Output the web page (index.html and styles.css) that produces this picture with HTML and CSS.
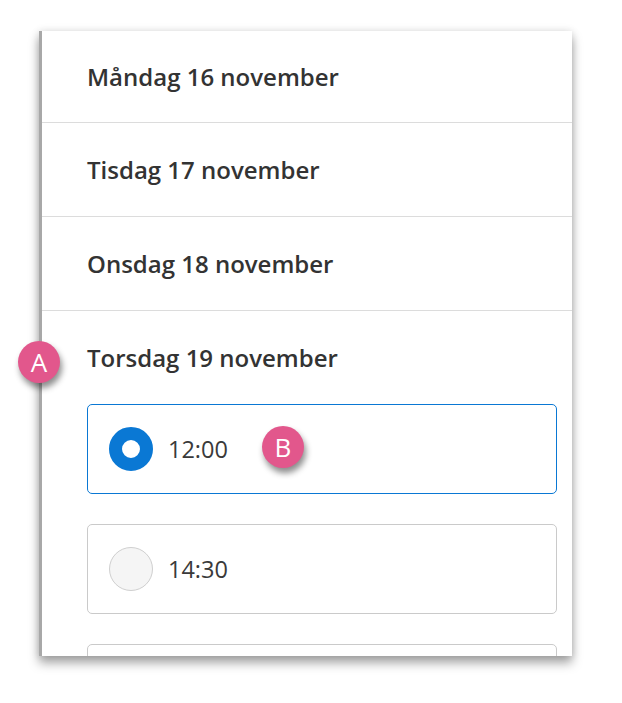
FILE: index.html
```html
<!DOCTYPE html>
<html lang="sv">
<head>
    <meta charset="UTF-8">
    <meta name="viewport" content="width=device-width, initial-scale=1.0">
    <title>Välj tid</title>
    <link rel="stylesheet" href="styles.css">
</head>
<body>
    <div class="panel">
        <div class="day">Måndag 16 november</div>
        <div class="day">Tisdag 17 november</div>
        <div class="day">Onsdag 18 november</div>
        <div class="day day-open">Torsdag 19 november</div>

        <div class="slots">
            <label class="slot selected">
                <span class="radio"></span>
                <span class="time">12:00</span>
            </label>
            <label class="slot">
                <span class="radio"></span>
                <span class="time">14:30</span>
            </label>
            <!-- next slot is only partly visible -->
            <div class="slot"></div>
        </div>
    </div>

    <div class="badge badge-a">A</div>
    <div class="badge badge-b">B</div>
</body>
</html>
```

FILE: styles.css
```css
html, body {
    height: 100%;
}

body {
    margin: 0;
    padding: 31px 0 0 39px;
    box-sizing: border-box;
    background: #fff;
    font-family: "Open Sans", Arial, sans-serif;
    color: #333;
}

.panel {
    width: 530px;
    height: 625px;
    overflow: hidden;
    background: #fff;
    border-left: 3px solid #a8a8a8;
    box-shadow: 0 7px 10px rgba(0, 0, 0, 0.35), 0 0 8px rgba(0, 0, 0, 0.12);
}

.day {
    height: 93px;
    display: flex;
    align-items: center;
    padding-left: 45px;
    font-size: 24px;
    font-weight: 600;
    border-bottom: 1px solid #dcdcdc;
}

.day:first-child {
    height: 91px;
}

.day-open {
    border-bottom: none;
}

.slots {
    padding: 0 15px 0 45px;
}

.slot {
    display: flex;
    align-items: center;
    height: 88px;
    padding-left: 21px;
    border: 1px solid #cacaca;
    border-radius: 5px;
    margin-bottom: 30px;
}

.slot.selected {
    border-color: #0a78d4;
}

.radio {
    width: 42px;
    height: 42px;
    border-radius: 50%;
    border: 1px solid #cfcfcf;
    background: #f5f5f5;
    margin-right: 15px;
}

.selected .radio {
    width: 18px;
    height: 18px;
    border: 13px solid #0a78d4;
    background: #fff;
}

.time {
    font-size: 23.5px;
    color: #3a3a3a;
}

.badge {
    position: absolute;
    width: 42px;
    height: 42px;
    border-radius: 50%;
    background: #e2578c;
    color: #fff;
    font-size: 26px;
    font-weight: 500;
    display: flex;
    align-items: center;
    justify-content: center;
    box-shadow: 2px 5px 6px rgba(0, 0, 0, 0.45);
}

.badge-a {
    left: 18px;
    top: 341px;
}

.badge-b {
    left: 262px;
    top: 426px;
}
```
